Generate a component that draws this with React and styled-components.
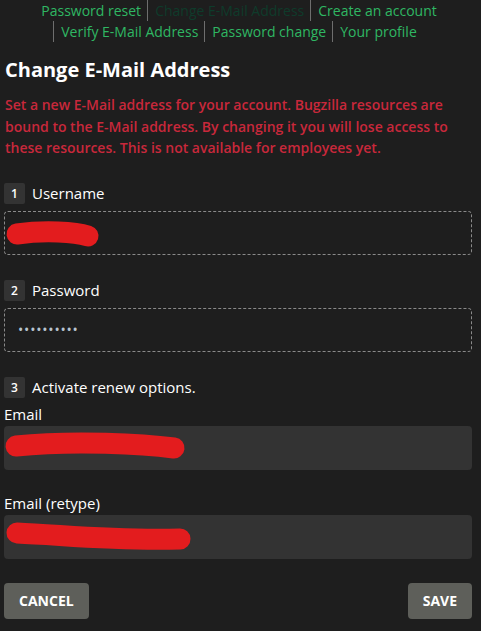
import React from 'react';
import styled, { createGlobalStyle } from 'styled-components';

const Global = createGlobalStyle`
  html, body {
    margin: 0;
    background: #1e1e1e;
  }
  body {
    font-family: "Open Sans", "Noto Sans", sans-serif;
    color: #fff;
  }
`;

const Page = styled.div`
  padding: 0 9px 0 4px;
`;

const Nav = styled.ul`
  list-style: none;
  margin: 0 0 14px;
  padding: 0;
  display: flex;
  flex-wrap: wrap;
  justify-content: center;
  font-size: 14px;
  line-height: 21px;
`;

const NavItem = styled.li`
  padding: 0 6px 0 7px;
  border-left: 1px solid ${({ $first }) => ($first ? 'transparent' : '#6e6e6e')};
  color: ${({ $active }) => ($active ? '#0f3b2b' : '#2fb763')};
  white-space: nowrap;
`;

const Title = styled.h1`
  margin: 0 0 11px 1px;
  font-size: 20px;
  font-weight: 700;
  line-height: 27px;
  color: #fff;
`;

const Warning = styled.p`
  margin: 0 0 24px 1px;
  font-size: 14px;
  font-weight: 600;
  line-height: 21.5px;
  color: #c8283b;
`;

const Step = styled.div`
  display: flex;
  align-items: center;
  gap: 7px;
  margin-bottom: ${({ $tight }) => ($tight ? '6px' : '7px')};
  font-size: 15px;
  line-height: 21px;
`;

const Badge = styled.span`
  width: 21px;
  height: 21px;
  border-radius: 2px;
  background: #333;
  display: flex;
  align-items: center;
  justify-content: center;
  font-size: 12px;
  font-weight: 600;
`;

const Field = styled.div`
  position: relative;
  height: 44px;
  box-sizing: border-box;
  border-radius: 4px;
  margin-bottom: ${({ $mb }) => $mb}px;
  border: ${({ $dashed }) => ($dashed ? '1px dashed #8a8a8a' : 'none')};
  background: ${({ $dashed }) => ($dashed ? 'transparent' : '#333')};
  display: flex;
  align-items: center;
  padding-left: 13px;
`;

const Dots = styled.span`
  color: #b8c4d0;
  font-size: 14px;
  letter-spacing: 0.8px;
  margin-top: -1px;
`;

const Label = styled.div`
  font-size: 15px;
  line-height: 21px;
  margin-bottom: 1px;
`;

const Scribble = styled.svg`
  position: absolute;
  left: 0;
  top: 0;
  pointer-events: none;
`;

const Actions = styled.div`
  display: flex;
  justify-content: space-between;
  margin-top: 24px;
`;

const Button = styled.button`
  height: 36px;
  padding: 0 ${({ $pad }) => $pad}px;
  border: none;
  border-radius: 4px;
  background: #5e5f5a;
  color: #fff;
  font-family: inherit;
  font-size: 14px;
  font-weight: 700;
  text-transform: uppercase;
`;

const Redact = ({ d }) => (
  <Scribble width="240" height="44">
    <path d={d} stroke="#e31c1e" strokeWidth="21" strokeLinecap="round" fill="none" />
  </Scribble>
);

export default function App() {
  return (
    <Page>
      <Global />
      <Nav>
        <NavItem $first>Password reset</NavItem>
        <NavItem $active>Change E-Mail Address</NavItem>
        <NavItem>Create an account</NavItem>
        <NavItem>Verify E-Mail Address</NavItem>
        <NavItem>Password change</NavItem>
        <NavItem>Your profile</NavItem>
      </Nav>

      <Title>Change E-Mail Address</Title>
      <Warning>
        Set a new E-Mail address for your account. Bugzilla resources are bound to the
        E-Mail address. By changing it you will lose access to these resources. This is not
        available for employees yet.
      </Warning>

      <Step>
        <Badge>1</Badge>
        Username
      </Step>
      <Field $dashed $mb={25}>
        <Redact d="M12 22 C40 18 70 20 83 24" />
      </Field>

      <Step>
        <Badge>2</Badge>
        Password
      </Step>
      <Field $dashed $mb={25}>
        <Dots>••••••••••</Dots>
      </Field>

      <Step $tight>
        <Badge>3</Badge>
        Activate renew options.
      </Step>
      <Label>Email</Label>
      <Field $mb={23}>
        <Redact d="M12 20 C70 14 140 18 170 22" />
      </Field>
      <Label>Email (retype)</Label>
      <Field $mb={0}>
        <Redact d="M13 18 C60 20 110 26 176 24" />
      </Field>

      <Actions>
        <Button $pad={15}>Cancel</Button>
        <Button $pad={15}>Save</Button>
      </Actions>
    </Page>
  );
}
